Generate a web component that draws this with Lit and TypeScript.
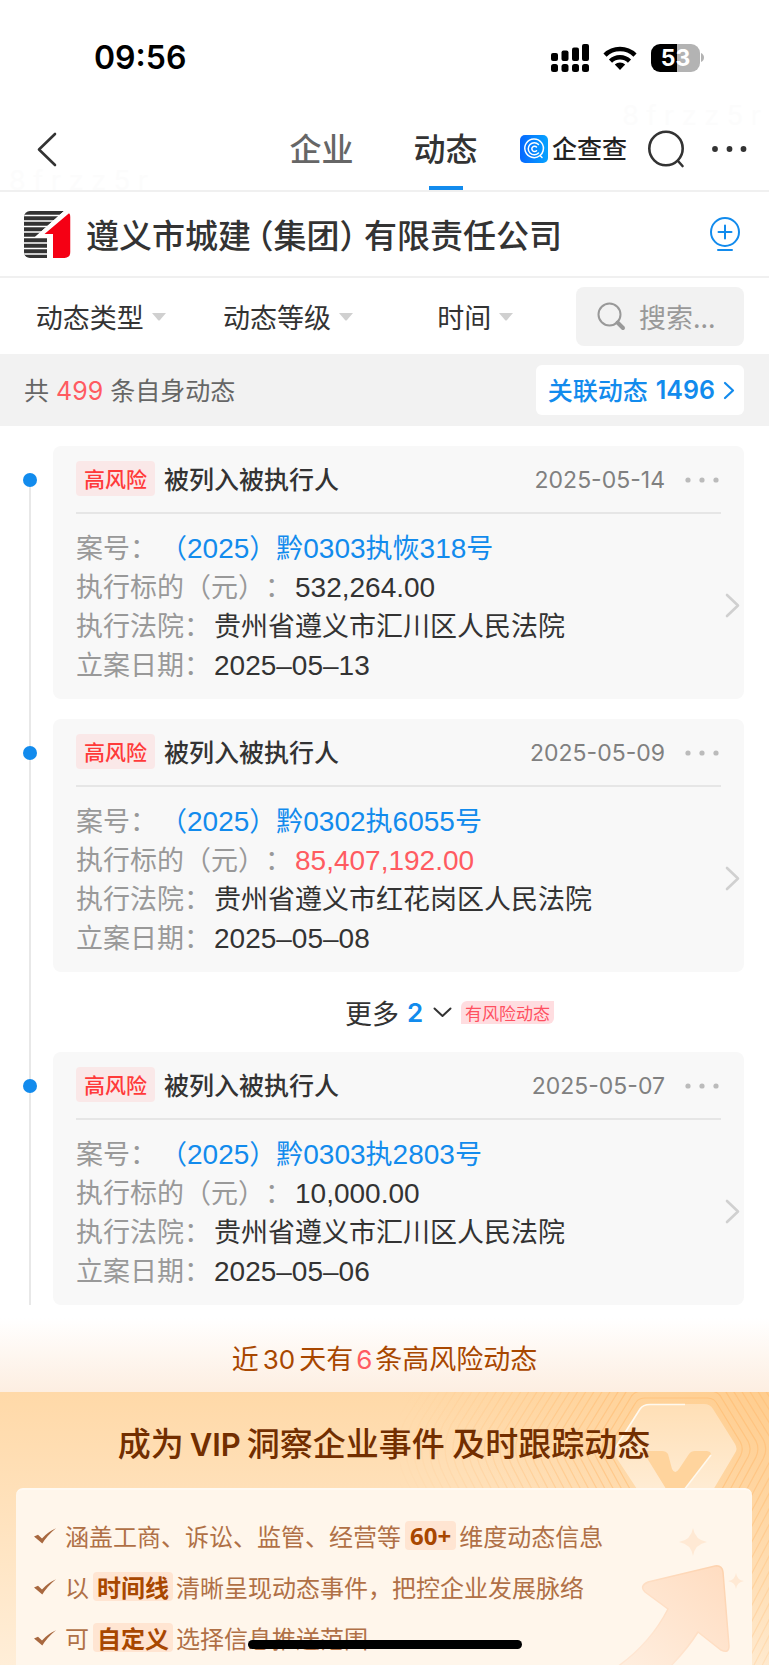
import { LitElement, html, css, svg } from "lit";
import { customElement, property } from "lit/decorators.js";

interface Row { label: string; value: string; kind?: "link" | "alert"; }
interface Item { date: string; rows: Row[]; }

const event = (date: string, no: string, amount: string, court: string, filed: string, alert = false): Item => ({
  date,
  rows: [
    { label: "案号：", value: no, kind: "link" },
    { label: "执行标的（元）：", value: amount, kind: alert ? "alert" : undefined },
    { label: "执行法院：", value: court },
    { label: "立案日期：", value: filed },
  ],
});

const FIRST = [
  event("2025-05-14", "（2025）黔0303执恢318号", "532,264.00", "贵州省遵义市汇川区人民法院", "2025–05–13"),
  event("2025-05-09", "（2025）黔0302执6055号", "85,407,192.00", "贵州省遵义市红花岗区人民法院", "2025–05–08", true),
];
const LATER = [
  event("2025-05-07", "（2025）黔0303执2803号", "10,000.00", "贵州省遵义市汇川区人民法院", "2025–05–06"),
];

/* Wraps runs of digits so that they take the Latin face. */
const digits = (text: string) =>
  text.split(/([\d.,–]+)/).filter(Boolean).map((part) =>
    /^[\d.,–]+$/.test(part) ? html`<span class="num">${part}</span>` : part);

const base = css`
  * { box-sizing: border-box; }
  button { font: inherit; color: inherit; background: none; border: 0; padding: 0; margin: 0; cursor: pointer; }
  a { color: inherit; text-decoration: none; }
  svg { display: block; flex: none; }
`;

@customElement("event-card")
export class EventCard extends LitElement {
  @property({ attribute: false }) item!: Item;
  static styles = [base, css`
    :host { display: block; position: relative; }
    .dot { position: absolute; left: -30px; top: 27px; width: 14px; height: 14px; border-radius: 50%; background: #128bed; }
    .card { background: #f8f8f8; border-radius: 8px; padding: 0 23px 16px; position: relative; }
    .head { display: flex; align-items: center; height: 68px; padding-bottom: 2px; border-bottom: 2px solid #e6e6e6; }
    .tag { background: #fae8e8; color: #ff3a3a; font-size: 21px; line-height: 35px; padding: 0 8px; border-radius: 4px; font-weight: 500; }
    .title { margin: 0 0 0 9px; font-size: 25px; font-weight: 500; line-height: 36px; color: #333; }
    .date { margin: 4px 0 0 auto; font-family: Inter, sans-serif; font-size: 23px; color: #808080; }
    .more { margin: 4px 2px 0 20px; }
    .rows { margin: 0; padding-top: 13px; font-size: 27px; line-height: 39px; }
    .row { display: flex; gap: 3px; }
    dt { color: #999; white-space: nowrap; }
    dd { margin: 0; color: #333; }
    .link { color: #128bed; }
    .alert { color: #ff5b61; }
    .num { font-family: "Liberation Sans", sans-serif; font-size: 28px; line-height: 1; }
    .go { position: absolute; right: 4px; top: 147px; }
  `];
  render() {
    return html`
      <span class="dot"></span>
      <article class="card">
        <div class="head">
          <span class="tag">高风险</span>
          <h2 class="title">被列入被执行人</h2>
          <time class="date">${this.item.date}</time>
          <button class="more" aria-label="更多操作">
            <svg width="34" height="6" fill="#bbb"><circle cx="3" cy="3" r="2.600"/><circle cx="17" cy="3" r="2.600"/><circle cx="31" cy="3" r="2.600"/></svg>
          </button>
        </div>
        <dl class="rows">
          ${this.item.rows.map((r) => html`<div class="row"><dt>${r.label}</dt><dd class=${r.kind ?? ""}>${
            r.kind === "link" ? html`<a href="#case">${digits(r.value)}</a>` : digits(r.value)}</dd></div>`)}
        </dl>
        <button class="go" aria-label="查看详情">
          <svg width="15" height="25" fill="none" stroke="#d0d0d0" stroke-width="2.6" stroke-linecap="round" stroke-linejoin="round"><path d="M2 2 13 12.5 2 23"/></svg>
        </button>
      </article>`;
  }
}

/* Rounded hexagon grown outward from the emblem by a step. */
const ring = (o: number) => {
  const cx = 276, cy = 57, w = 61 + o * 1.15, h = 45 + o, t = 35 + o * 0.55;
  const q = 6 + o * 0.12;
  return `M${cx - t + q} ${cy - h}H${cx + t - q}Q${cx + t} ${cy - h} ${cx + t + q * 0.5} ${cy - h + q}L${cx + w - q * 0.5} ${cy - q}Q${cx + w} ${cy} ${cx + w - q * 0.5} ${cy + q}L${cx + t * 0.3} ${cy + h * 2}H${cx - t * 0.3}L${cx - w + q * 0.5} ${cy + q}Q${cx - w} ${cy} ${cx - w + q * 0.5} ${cy - q}L${cx - t - q * 0.5} ${cy - h + q}Q${cx - t} ${cy - h} ${cx - t + q} ${cy - h}Z`;
};

@customElement("vip-panel")
export class VipPanel extends LitElement {
  static styles = [base, css`
    :host { display: flex; flex-direction: column; position: relative; overflow: hidden; padding: 26px 17px 0 16px; background: linear-gradient(#ffd9a8, #ffe2bd 45%, #ffeed8); }
    .pattern { position: absolute; top: 0; right: 0; }
    .title { position: relative; margin: 0 0 22px; font-size: 33px; line-height: 48px; font-weight: 500; color: #722e00; text-align: center; }
    .latin { font-family: Inter, sans-serif; font-size: 31px; font-weight: 600; line-height: 1; margin: 0 6px; }
    .box { position: relative; flex: 1; background: #fff6eb; border: solid #fffaf3; border-width: 2px 0 0; border-radius: 7px 7px 0 0; overflow: hidden; padding-top: 20px; }
    .art { position: absolute; top: 0; right: 0; }
    .list { position: relative; list-style: none; margin: 0; padding: 0 0 0 17px; font-size: 24px; color: #b07046; }
    .point { display: flex; align-items: center; height: 51px; }
    .tick { margin-right: 8px; }
    .mark { background: #ffe5d2; color: #a84700; font-weight: 700; line-height: 29px; padding: 0 4px; border-radius: 4px; margin: 0 3px 0 4px; }
    .wide { font-family: "Noto Sans", sans-serif; padding: 0 5px; }
  `];
  point(before: string, mark: string, after: string, latin = false) {
    return html`<li class="point">
      <svg class="tick" width="24" height="18" fill="#a8683f"><path d="M1 9.500 5 7.800 9 11.500Q15 4.500 23 1.200 14 8.500 9.300 16.600Z"/></svg>
      <span>${before}</span><strong class="mark ${latin ? "wide" : ""}">${mark}</strong><span>${after}</span></li>`;
  }
  render() {
    return html`
      <svg class="pattern" width="369" height="273" viewBox="0 0 369 273" fill="none">
        <defs>
          <linearGradient id="mask" x2="0" y2="1"><stop stop-color="#ffdfb6"/><stop offset="1" stop-color="#fff0dc"/></linearGradient>
          <linearGradient id="warm" x1=".4" y1=".5" x2="1" y2="0"><stop stop-color="#ffcf92" stop-opacity="0"/><stop offset="1" stop-color="#ffca88" stop-opacity=".8"/></linearGradient>
        </defs>
        <rect width="369" height="273" fill="url(#warm)"/>
        <g stroke="#ffb362" stroke-opacity=".45" stroke-width="1.200">${Array.from({ length: 30 }, (_, i) => svg`<path d=${ring(6 + i * 7)} opacity=${Math.max(0, 1 - i * 0.035)}/>`)}</g>
        <path d="M250 12H304Q310 12 313 17L335 52Q338 57 335 61L300 120H252L216 65Q213 60 216 55L240 17Q243 12 250 12Z" fill="url(#mask)"/>
        <path d="M214 58 240 17Q243 12.500 250 12.500H285" stroke="#fffaf0" stroke-width="1.600"/>
        <path d="M246 59H262Q266 59 268 62L272 77Q275 83 279 77L289 62Q291 59 295 59H307Q313 60 310 65L283 100H268L247 66Z" fill="#ffd49d"/>
        <path d="M311 63 284 98" stroke="#fffaf0" stroke-width="1.600"/>
      </svg>
      <h2 class="title">成为<span class="latin">VIP</span>洞察企业事件 及时跟踪动态</h2>
      <section class="box">
        <svg class="art" width="160" height="177" viewBox="0 0 160 177" fill="none">
          <defs>
            <linearGradient id="arrow" x1="1" x2="0" y2="1"><stop stop-color="#ffdcc0"/><stop offset="1" stop-color="#fff0e2"/></linearGradient>
            <linearGradient id="edge" x1="1" x2="0" y2="1"><stop stop-color="#fdd1ac"/><stop offset=".7" stop-color="#ffe6d2"/></linearGradient>
          </defs>
          <path d="M56 92 123 76Q130 75 131 82L137 156Q137 164 129 160L106 142Q95 160 72 183H16Q56 158 76 119L53 102Q47 96 56 92Z" fill="url(#arrow)" stroke="url(#edge)" stroke-width="1.500"/>
          <path d="M101 38Q103 50 115 52Q103 54 101 66Q99 54 87 52Q99 50 101 38Z" fill="#ffe9d4"/>
          <path d="M144 83Q145 90 152 91Q145 92 144 99Q143 92 136 91Q143 90 144 83Z" fill="#ffe9d4"/>
        </svg>
        <ul class="list">
          ${this.point("涵盖工商、诉讼、监管、经营等", "60+", "维度动态信息", true)}
          ${this.point("以", "时间线", "清晰呈现动态事件，把控企业发展脉络")}
          ${this.point("可", "自定义", "选择信息推送范围")}
        </ul>
      </section>`;
  }
}

@customElement("app-root")
export class AppRoot extends LitElement {
  static styles = [base, css`
    :host { display: flex; flex-direction: column; min-height: 100vh; position: relative; background: #fff; color: #333; font-family: "Noto Sans CJK SC", sans-serif; text-spacing-trim: space-all; }
    .status { display: flex; align-items: center; height: 108px; padding: 7px 65px 0 94px; color: #000; font-family: Inter, sans-serif; }
    .clock { font-size: 32px; font-weight: 600; margin-right: auto; }
    .wifi { margin: 0 14px; }
    .battery { width: 49px; height: 28px; border-radius: 9px; background: linear-gradient(90deg, #000 53%, #b3b3b3 53%); color: #fff; font-size: 23px; line-height: 28px; font-weight: 700; text-align: center; }
    .nub { margin-left: 1px; }
    .nav { display: grid; grid-template-columns: 1fr auto 1fr; height: 84px; border-bottom: 2px solid #f0f0f0; }
    .back { justify-self: start; padding: 0 37px; }
    .tabs { display: flex; gap: 60px; font-size: 32px; font-weight: 500; padding-right: 2px; }
    .tab { display: flex; align-items: center; padding-bottom: 4px; color: #666; position: relative; }
    .on { color: #333; }
    .on::after { content: ""; position: absolute; left: 50%; bottom: 0; width: 34px; margin-left: -17px; height: 4px; background: #128bed; }
    .tools { display: flex; align-items: center; justify-content: flex-end; padding-right: 22px; }
    .brand { display: flex; align-items: center; gap: 4px; font-size: 25px; font-weight: 500; color: #222; line-height: 30px; white-space: nowrap; }
    .word { padding-bottom: 4px; }
    .find { margin: 0 27px 0 21px; }
    .company { display: flex; align-items: center; height: 86px; padding: 0 28px 0 24px; border-bottom: 2px solid #f0f0f0; }
    .name { margin: 0 auto 0 15px; font-size: 33px; font-weight: 500; line-height: 48px; }
    .bracket { font-feature-settings: "halt"; }
    .open { margin-left: 6px; }
    .close { margin-right: 8px; }
    .filters { display: grid; grid-template-columns: repeat(3, 1fr) 175px; align-items: center; height: 76px; padding: 0 25px 0 7px; font-size: 27px; }
    .filter { display: flex; align-items: center; justify-content: center; gap: 8px; white-space: nowrap; }
    .caret { margin-top: 1px; }
    .search { display: flex; align-items: center; gap: 13px; height: 59px; background: #f2f2f2; border-radius: 8px; padding: 0 16px 0 21px; margin-left: 7px; }
    .search input { flex: 1; width: 100%; min-width: 0; border: 0; padding: 0; background: none; outline: 0; font: inherit; color: #333; }
    .search input::placeholder { color: #999; opacity: 1; }
    .summary { display: flex; align-items: center; justify-content: space-between; height: 72px; padding: 0 25px 0 24px; background: #f2f2f2; font-size: 25px; line-height: 36px; color: #666; }
    .total-text { padding-bottom: 2px; }
    .count { font-family: Inter, sans-serif; font-size: 25px; line-height: 1; color: #ff5b61; margin: 0 7px; }
    .related { display: flex; align-items: center; height: 50px; padding: 0 9px 0 12px; border-radius: 6px; background: #fff; color: #128bed; font-weight: 500; }
    .related-text { padding-bottom: 2px; }
    .total { font-family: Inter, sans-serif; font-size: 25px; font-weight: 600; margin: 0 8px; }
    .feed { position: relative; display: flex; flex-direction: column; gap: 20px; margin: 20px 25px 0 0; padding-left: 53px; }
    .feed::before { content: ""; position: absolute; left: 29px; top: 34px; bottom: 0; width: 2px; background: #e8e8e8; }
    .expand { position: relative; display: flex; align-items: center; align-self: center; height: 40px; font-size: 27px; }
    .extra { font-family: Inter, sans-serif; font-weight: 600; color: #128bed; margin: 0 10px 0 8px; font-size: 26px; }
    .hint { position: absolute; left: 100%; top: 9px; margin-left: 9px; padding: 0 4px; background: #ffdde0; color: #ff5060; font-size: 17px; line-height: 23px; border-radius: 6px 0; white-space: nowrap; }
    .recent { margin: 0; padding: 31px 0 12px; text-align: center; font-size: 27px; line-height: 44px; color: #a84700; background: linear-gradient(#fff 15%, #fdeee1); }
    .lat { font-family: Inter, sans-serif; font-size: 26px; line-height: 1; margin: 0 4px; }
    .six { color: #ff5b61; margin: 0 3px; }
    vip-panel { flex: 1; }
    .home { position: fixed; left: 50%; bottom: 16px; width: 274px; height: 9px; margin-left: -137px; border-radius: 5px; background: #000; }
    .ghost { position: absolute; font-family: Inter, sans-serif; font-size: 27px; line-height: 30px; color: #fcfcfc; pointer-events: none; white-space: pre; }
    .upper { right: 8px; top: 101px; }
    .lower { left: 9px; top: 166px; }
  `];
  filter(label: string) {
    return html`<button class="filter">${label}<svg class="caret" width="14" height="8" fill="#d0d0d0"><path d="M0 0H14L8 7Q7 8 6 7Z"/></svg></button>`;
  }
  render() {
    return html`
      <span class="ghost upper" aria-hidden="true">8 f r z z 5 r</span>
      <span class="ghost lower" aria-hidden="true">8 f r z z 5 r</span>
      <div class="status">
        <span class="clock">09:56</span>
        <svg width="38" height="28"><rect y="9" width="7" height="8" rx="2"/><rect x="10.500" y="6.500" width="7" height="10.500" rx="2"/><rect x="21" y="3.500" width="7" height="13.500" rx="2"/><rect x="31" width="7" height="17" rx="2"/><rect y="20" width="7" height="8" rx="2.500"/><rect x="10.500" y="20" width="7" height="8" rx="2.500"/><rect x="21" y="20" width="7" height="8" rx="2.500"/><rect x="31" y="20" width="7" height="8" rx="2.500"/></svg>
        <svg class="wifi" width="34" height="26" fill="none" stroke="#000" stroke-width="4.500"><path d="M2 10.200A21.500 21.500 0 0 1 32 10.200"/><path d="M7.500 16.200A13.600 13.600 0 0 1 26.500 16.200"/><path d="M17 25 11.800 19.600A7.600 7.600 0 0 1 22.200 19.600Z" fill="#000" stroke="none"/></svg>
        <span class="battery">53</span>
        <svg class="nub" width="3" height="9"><path d="M0 0Q3 1.500 3 4.500T0 9Z" fill="#b3b3b3"/></svg>
      </div>
      <header class="nav">
        <button class="back" aria-label="返回"><svg width="20" height="35" fill="none" stroke="#333" stroke-width="2.600" stroke-linecap="round" stroke-linejoin="round"><path d="M18 2 2 17.500 18 33"/></svg></button>
        <nav class="tabs"><a class="tab" href="#company">企业</a><a class="tab on" href="#events">动态</a></nav>
        <div class="tools">
          <a class="brand" href="#home">
            <svg width="28" height="28" viewBox="0 0 28 28" fill="none"><defs><linearGradient id="q" x2="1"><stop stop-color="#0768ff"/><stop offset="1" stop-color="#06a3ff"/></linearGradient></defs><rect width="28" height="28" rx="5" fill="url(#q)"/><g stroke="#fff" stroke-width="1.500" stroke-linecap="round"><path d="M20 20.500A9.300 9.300 0 1 1 23 16Q22.500 18.500 20 20.500L22 22.500"/><path d="M18.500 9.500A6 6 0 1 0 18.500 18"/><path d="M16.500 12A2.700 2.700 0 1 0 16.500 15.700"/></g></svg>
            <span class="word">企查查</span>
          </a>
          <button class="find" aria-label="搜索"><svg width="37" height="38" fill="none" stroke="#333" stroke-width="2.600" stroke-linecap="round"><circle cx="18" cy="18.500" r="16.700"/><path d="M30 31 34.500 36"/></svg></button>
          <button aria-label="菜单"><svg width="35" height="6" fill="#333"><circle cx="3" cy="3" r="2.900"/><circle cx="17.500" cy="3" r="2.900"/><circle cx="31.500" cy="3" r="2.900"/></svg></button>
        </div>
      </header>
      <section class="company">
        <svg width="47" height="47" viewBox="0 0 47 47"><defs><clipPath id="c"><rect width="46.500" height="47" rx="6"/></clipPath></defs><g clip-path="url(#c)"><path d="M0 0H40L11 26H23V47H0Z" fill="#333"/><path d="M0 4.500H40M0 10H40M0 15.500H40M0 21H40M0 26.500H23M0 32H23M0 37.500H23M0 43H23" stroke="#fff" stroke-width="1.600"/><path d="M40 0H47V3L29 20V47H23V26H11Z" fill="#fff"/><path d="M20.500 23 46.500 1V47H29V23Z" fill="#f50014"/></g></svg>
        <h1 class="name">遵义市城建<span class="bracket open">（</span>集团<span class="bracket close">）</span>有限责任公司</h1>
        <button aria-label="关注"><svg width="32" height="36" fill="none" stroke="#128bed" stroke-width="2" stroke-linecap="round"><circle cx="16" cy="16" r="14"/><path d="M9.500 16H22.500M16 9.500V22.500M9 34H23"/></svg></button>
      </section>
      <div class="filters">
        ${this.filter("动态类型")}${this.filter("动态等级")}${this.filter("时间")}
        <label class="search"><svg width="29" height="29" fill="none" stroke="#999"><circle cx="12.500" cy="12.500" r="11" stroke-width="2"/><path d="M20.500 20.500 26 26" stroke-width="4" stroke-linecap="round"/></svg><input type="text" placeholder="搜索..." aria-label="搜索动态"></label>
      </div>
      <div class="summary">
        <span class="total-text">共<span class="count">499</span>条自身动态</span>
        <a class="related" href="#related"><span class="related-text">关联动态</span><span class="total">1496</span><svg width="12" height="19" fill="none" stroke="#128bed" stroke-width="2.200" stroke-linecap="round" stroke-linejoin="round"><path d="M2 2 10 9.500 2 17"/></svg></a>
      </div>
      <main class="feed">
        ${FIRST.map((i) => html`<event-card .item=${i}></event-card>`)}
        <button class="expand">更多<span class="extra">2</span><svg width="19" height="11" fill="none" stroke="#333" stroke-width="2" stroke-linecap="round" stroke-linejoin="round"><path d="M1.500 1.500 9.500 9 17.500 1.500"/></svg><span class="hint">有风险动态</span></button>
        ${LATER.map((i) => html`<event-card .item=${i}></event-card>`)}
      </main>
      <p class="recent">近<span class="lat">30</span>天有<span class="lat six">6</span>条高风险动态</p>
      <vip-panel></vip-panel>
      <span class="home"></span>`;
  }
}
